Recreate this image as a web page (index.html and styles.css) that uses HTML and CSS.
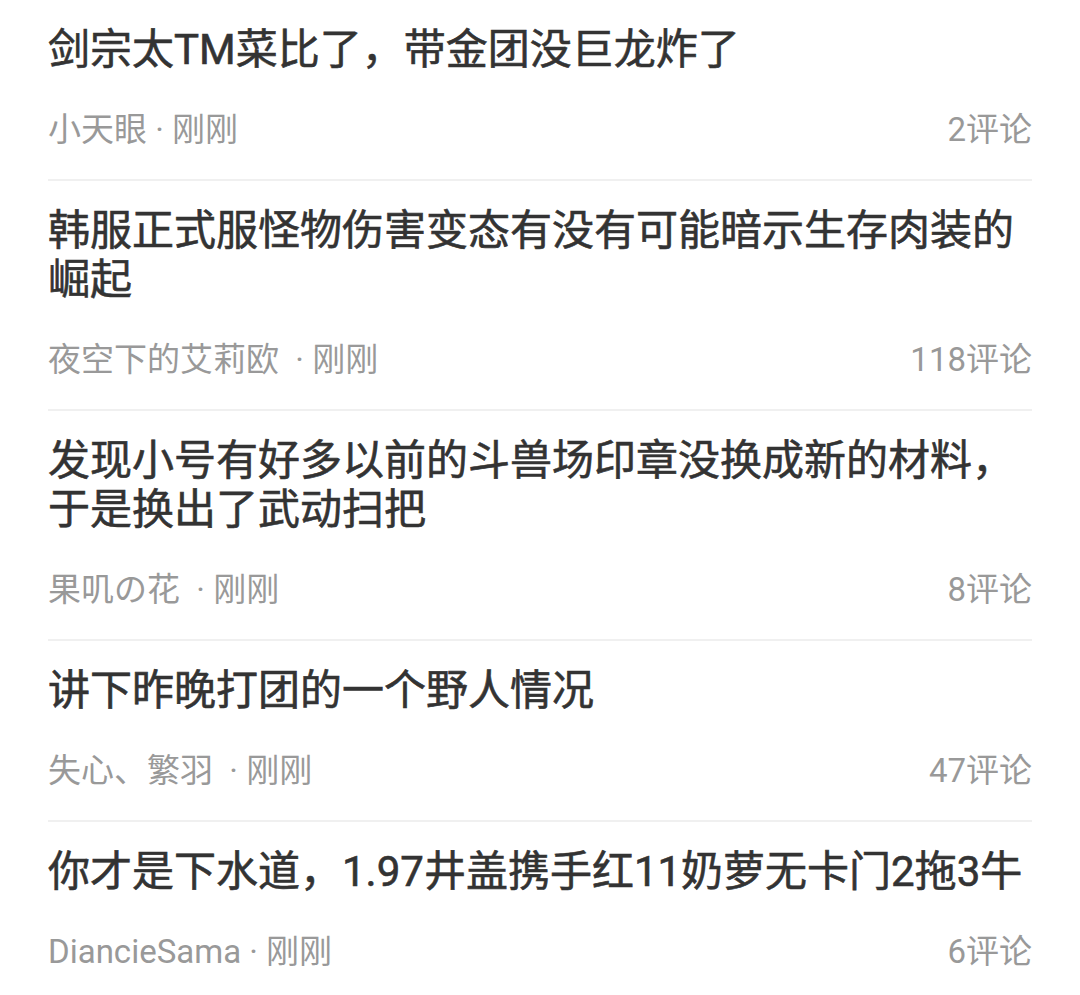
FILE: index.html
```html
<!DOCTYPE html>
<html lang="zh-CN">
<head>
  <meta charset="UTF-8">
  <meta name="viewport" content="width=device-width, initial-scale=1.0">
  <title>帖子列表</title>
  <link rel="stylesheet" href="styles.css">
</head>
<body>
  <ul class="lista-posts">
    <li class="post">
      <div class="post-titulo">剑宗太TM菜比了，带金团没巨龙炸了</div>
      <div class="post-meta">
        <span class="post-autor">小天眼 · 刚刚</span>
        <span class="post-comentarios">2评论</span>
      </div>
    </li>
    <li class="post">
      <div class="post-titulo">韩服正式服怪物伤害变态有没有可能暗示生存肉装的崛起</div>
      <div class="post-meta">
        <span class="post-autor">夜空下的艾莉欧 &nbsp;· 刚刚</span>
        <span class="post-comentarios">118评论</span>
      </div>
    </li>
    <li class="post">
      <div class="post-titulo">发现小号有好多以前的斗兽场印章没换成新的材料，于是换出了武动扫把</div>
      <div class="post-meta">
        <span class="post-autor">果叽の花 &nbsp;· 刚刚</span>
        <span class="post-comentarios">8评论</span>
      </div>
    </li>
    <li class="post">
      <div class="post-titulo">讲下昨晚打团的一个野人情况</div>
      <div class="post-meta">
        <span class="post-autor">失心、繁羽 &nbsp;· 刚刚</span>
        <span class="post-comentarios">47评论</span>
      </div>
    </li>
    <li class="post">
      <div class="post-titulo">你才是下水道，1.97井盖携手红11奶萝无卡门2拖3牛</div>
      <div class="post-meta">
        <span class="post-autor">DiancieSama · 刚刚</span>
        <span class="post-comentarios">6评论</span>
      </div>
    </li>
  </ul>
</body>
</html>
```

FILE: styles.css
```css
body {
  margin: 0;
  background-color: #fff;
  font-family: Roboto, "Noto Sans CJK SC", sans-serif;
}
.lista-posts {
  list-style: none;
  margin: 0;
  padding: 0 48px;
}
.post {
  padding: 25px 0 27px;
  border-bottom: 2px solid #f0f0f0;
}
.post:last-child {
  border-bottom: none;
}
.post-titulo {
  font-size: 42px;
  line-height: 49px;
  font-weight: 400;
  -webkit-text-stroke: 0.6px #333;
  color: #333;
}
.post-meta {
  display: flex;
  justify-content: space-between;
  margin-top: 34px;
  font-size: 33px;
  line-height: 44px;
  color: #999;
}
```
